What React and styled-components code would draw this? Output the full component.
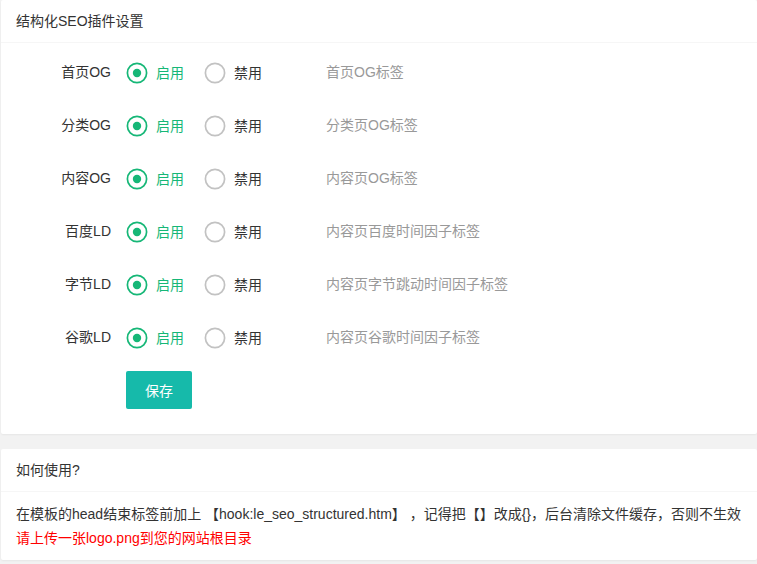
import React from "react";
import styled, { createGlobalStyle } from "styled-components";

const GlobalStyle = createGlobalStyle`
  html, body {
    margin: 0;
    padding: 0;
    background: #f2f2f2;
    font-family: "Liberation Sans", "Noto Sans CJK SC", Arial, sans-serif;
    font-size: 14px;
    color: #333;
  }
`;

const Page = styled.div`
  padding-left: 1px;
`;

const Card = styled.div`
  background: #fff;
  border-radius: 2px;
  box-shadow: 0 1px 2px 0 rgba(0, 0, 0, 0.05);
  margin-bottom: 15px;
`;

const CardHeader = styled.div`
  height: 42px;
  line-height: 42px;
  padding: 0 15px;
  border-bottom: 1px solid #f6f6f6;
  color: #333;
`;

const CardBody = styled.div`
  padding: 10px 15px;
  line-height: 24px;
`;

const FormItem = styled.div`
  display: flex;
  align-items: flex-start;
  margin-bottom: 15px;
`;

const Label = styled.label`
  width: 80px;
  padding: 9px 15px;
  line-height: 20px;
  text-align: right;
  flex-shrink: 0;
`;

const Inline = styled.div`
  display: flex;
  width: 190px;
  margin-right: 10px;
  flex-shrink: 0;
`;

const Radio = styled.div`
  display: flex;
  align-items: center;
  height: 28px;
  margin: 6px 10px 0 0;
  padding-right: 10px;
  cursor: pointer;
  color: ${(p) => (p.checked ? "#16b777" : "#333")};
  svg {
    margin-right: 8px;
  }
`;

const Aux = styled.div`
  padding: 9px 0;
  line-height: 20px;
  color: #999;
`;

const Button = styled.button`
  height: 38px;
  padding: 0 18px;
  margin-left: 110px;
  border: 1px solid transparent;
  border-radius: 2px;
  background: #16baaa;
  color: #fff;
  font-family: inherit;
  font-size: 14px;
`;

const Line = styled.div`
  white-space: nowrap;
  color: ${(p) => p.color || "#333"};
`;

const RadioIcon = ({ checked }) => (
  <svg width="22" height="22" viewBox="0 0 22 22">
    <circle
      cx="11"
      cy="11"
      r="9.6"
      fill="none"
      stroke={checked ? "#16b777" : "#c2c2c2"}
      strokeWidth="1.7"
    />
    {checked && <circle cx="11" cy="11" r="4.2" fill="#16b777" />}
  </svg>
);

const rows = [
  ["首页OG", "首页OG标签"],
  ["分类OG", "分类页OG标签"],
  ["内容OG", "内容页OG标签"],
  ["百度LD", "内容页百度时间因子标签"],
  ["字节LD", "内容页字节跳动时间因子标签"],
  ["谷歌LD", "内容页谷歌时间因子标签"],
];

export default function App() {
  return (
    <Page>
      <GlobalStyle />
      <Card>
        <CardHeader>结构化SEO插件设置</CardHeader>
        <CardBody>
          {rows.map(([label, aux]) => (
            <FormItem key={label}>
              <Label>{label}</Label>
              <Inline>
                <Radio checked>
                  <RadioIcon checked />
                  启用
                </Radio>
                <Radio>
                  <RadioIcon />
                  禁用
                </Radio>
              </Inline>
              <Aux>{aux}</Aux>
            </FormItem>
          ))}
          <FormItem>
            <Button>保存</Button>
          </FormItem>
        </CardBody>
      </Card>
      <Card>
        <CardHeader>如何使用?</CardHeader>
        <CardBody>
          <Line>
            在模板的head结束标签前加上 【hook:le_seo_structured.htm】 ，记得把【】改成{"{}"}，后台清除文件缓存，否则不生效
          </Line>
          <Line color="#ff0000">请上传一张logo.png到您的网站根目录</Line>
        </CardBody>
      </Card>
    </Page>
  );
}
